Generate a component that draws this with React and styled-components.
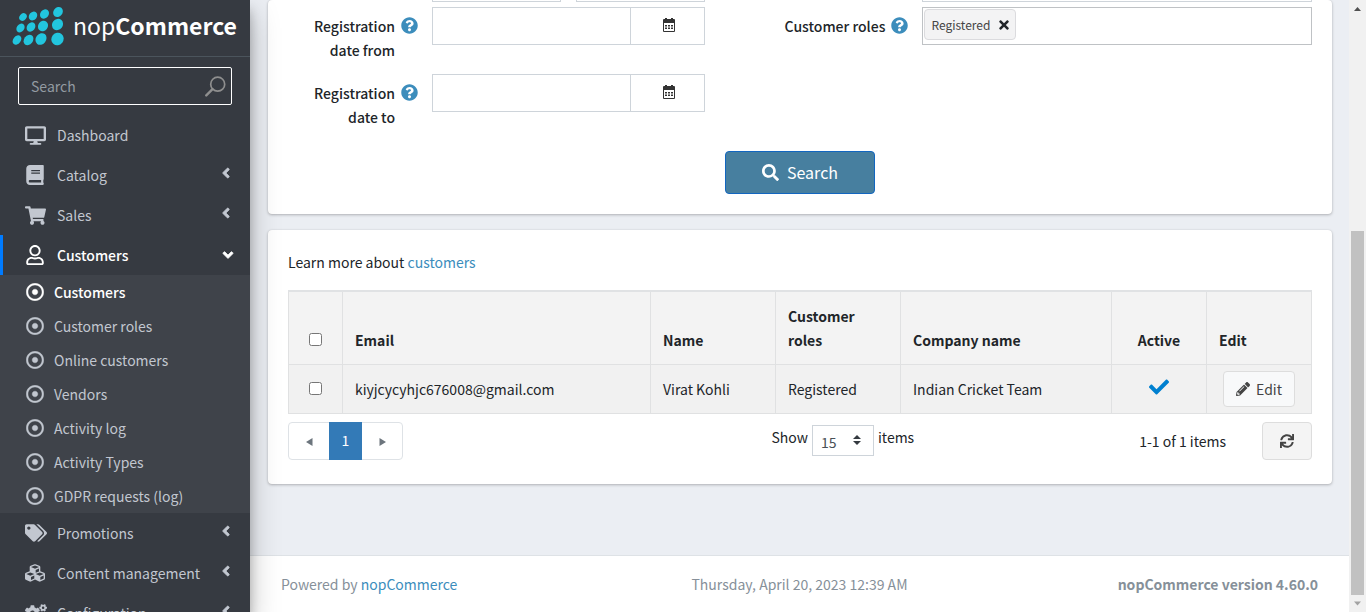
import React from "react";
import styled, { createGlobalStyle } from "styled-components";
import {
  FaAngleDown,
  FaAngleLeft,
  FaBook,
  FaCheck,
  FaCogs,
  FaCubes,
  FaDesktop,
  FaPencilAlt,
  FaQuestionCircle,
  FaRegDotCircle,
  FaRegUser,
  FaSearch,
  FaShoppingCart,
  FaSync,
  FaTags,
  FaTimes,
} from "react-icons/fa";

const GlobalStyle = createGlobalStyle`
  *, *::before, *::after { box-sizing: border-box; }
  body {
    margin: 0;
    background: #ebeef3;
    color: #212529;
    font-family: "Noto Sans CJK SC", "Noto Sans", sans-serif;
    font-size: 14px;
    line-height: 24px;
  }
  button, input, select { font: inherit; color: inherit; }
  a { color: #3c8dbc; text-decoration: none; }
`;

const Shell = styled.div`
  display: flex;
  height: 100vh;
  overflow: hidden;
`;

/* Sidebar */

const Sidebar = styled.aside`
  flex: none;
  width: 250px;
  overflow: hidden;
  z-index: 1;
  background: #363a41;
  color: #c2c7d0;
  box-shadow: 0 14px 28px rgba(0, 0, 0, 0.25), 0 10px 10px rgba(0, 0, 0, 0.22);
`;

const Brand = styled.a`
  display: flex;
  align-items: center;
  gap: 8px;
  height: 57px;
  padding: 0 12px 4px;
  border-bottom: 1px solid #4b545c;
  color: #fff;
  font-size: 23px;

  svg {
    flex: none;
  }

  span {
    padding-bottom: 2px;
  }
`;

const SearchBox = styled.label`
  display: flex;
  align-items: center;
  height: 38px;
  margin: 10px 18px;
  padding: 0 5px 0 12px;
  border: 1px solid #fff;
  border-radius: 2px;
`;

const SearchField = styled.input`
  flex: 1;
  min-width: 0;
  padding: 0;
  border: 0;
  outline: 0;
  background: none;

  &::placeholder {
    color: #939ba2;
    opacity: 1;
  }
`;

const Menu = styled.ul`
  margin: 0;
  padding: 0;
  list-style: none;
`;

const MenuLink = styled.a`
  display: grid;
  grid-template-columns: 22px 1fr 12px;
  align-items: center;
  column-gap: 10px;
  height: 40px;
  padding: 0 ${(p) => (p.$active ? 18 : 20)}px 0 22px;
  border-left: 3px solid ${(p) => (p.$active ? "#007bff" : "transparent")};
  color: ${(p) => (p.$active ? "#fff" : "#c2c7d0")};
  font-weight: ${(p) => (p.$active ? 500 : 400)};
  white-space: nowrap;

  svg:last-child {
    margin-bottom: ${(p) => (p.$active ? 0 : 4)}px;
    stroke: currentColor;
    stroke-width: 24px;
  }
`;

const SubMenu = styled(Menu)`
  background: #3f434a;
`;

const SubLink = styled.a`
  display: flex;
  align-items: center;
  gap: 10px;
  height: 34px;
  padding-left: 26px;
  color: ${(p) => (p.$active ? "#fff" : "#c2c7d0")};
  font-weight: ${(p) => (p.$active ? 500 : 400)};

  svg {
    stroke: currentColor;
    stroke-width: 12px;
  }
`;

/* Page */

const Page = styled.div`
  display: flex;
  flex: 1;
  flex-direction: column;
  min-width: 0;
`;

const Content = styled.main`
  display: flex;
  flex: 1;
  flex-direction: column;
  gap: 16px;
  padding: 0 17px 0 18px;
`;

const Card = styled.section`
  padding: 20px;
  border-radius: 4px;
  background: #fff;
  box-shadow: 0 0 1px rgba(0, 0, 0, 0.13), 0 1px 3px rgba(0, 0, 0, 0.25);
`;

const FilterCard = styled(Card)`
  padding-top: 0;
`;

const Filters = styled.form`
  display: grid;
  grid-template-columns: 144px 273fr 217px 389fr;
  row-gap: 5px;
  align-items: start;
  margin-top: -36px;
`;

const LabelCell = styled.div`
  display: flex;
  grid-column: ${(p) => p.$column};
  justify-content: flex-end;
  gap: 6px;
  padding: 7px 14px 0 0;

  svg {
    flex: none;
    margin-top: 3px;
    color: #3c8dbc;
  }
`;

const FieldLabel = styled.label`
  width: ${(p) => (p.$wide ? "auto" : "90px")};
  height: ${(p) => (p.$wide ? "24px" : "55px")};
  font-weight: 500;
  text-align: right;
`;

const InputPair = styled.div`
  display: grid;
  grid-column: 2;
  grid-template-columns: 1fr 1fr;
  gap: 15px;
`;

const TextInput = styled.input`
  width: 100%;
  min-width: 0;
  height: 38px;
  padding: 6px 12px;
  border: 1px solid #ced4da;
  background: #fff;
`;

const DateGroup = styled.div`
  display: grid;
  grid-template-columns: 1fr 74px;
  height: 38px;
  border: 1px solid #ced4da;
`;

const DateInput = styled.input`
  min-width: 0;
  padding: 6px 12px;
  border: 0;
  background: #fff;
`;

const DateButton = styled.button`
  display: grid;
  place-items: center;
  padding: 0 0 2px 2px;
  border: 0;
  border-left: 1px solid #ced4da;
  background: #fff;
`;

const TagBox = styled.div`
  display: flex;
  align-items: flex-start;
  height: 38px;
  padding: 1px;
  border: 1px solid #bfc2c5;
`;

const Tag = styled.span`
  display: flex;
  align-items: center;
  gap: 7px;
  height: 31px;
  padding: 0 4px 0 6px;
  border: 1px solid #dbdbde;
  border-radius: 4px;
  background: #f3f3f4;
  color: #444;
  font-size: 12px;
`;

const TagRemove = styled.button`
  display: flex;
  padding: 0;
  border: 0;
  background: none;
  color: #212529;
`;

const SearchButton = styled.button`
  display: flex;
  align-items: center;
  justify-content: center;
  gap: 8px;
  width: 150px;
  height: 43px;
  margin: 15px auto 0;
  padding-bottom: 2px;
  border: 1px solid #1266c0;
  border-radius: 4px;
  background: #477f9f;
  color: #fff;
  font-size: 16px;
`;

const Intro = styled.p`
  margin: 0 0 16px;
`;

const Grid = styled.table`
  width: 100%;
  table-layout: fixed;
  border-collapse: collapse;
  border-top: 2px solid #e0e2e4;
  background: #f3f3f3;
`;

const Col = styled.col`
  width: ${(p) => p.$width}px;
`;

const HeadCell = styled.th`
  height: 73px;
  padding: 12px;
  border: 1px solid #e0e1e2;
  font-weight: 700;
  text-align: ${(p) => p.$align || "left"};
  vertical-align: bottom;
`;

const Cell = styled.td`
  height: 49px;
  padding: 0 12px;
  border: 1px solid #e0e1e2;
  background: #f1f1f1;
  text-align: ${(p) => p.$align || "left"};
  white-space: nowrap;
`;

const Check = styled.input`
  width: 13px;
  height: 13px;
  margin: 0;
  vertical-align: baseline;
`;

const ActiveMark = styled(FaCheck)`
  display: block;
  margin: 0 auto 4px;
  color: #0080d0;
`;

const EditButton = styled.button`
  display: flex;
  align-items: center;
  justify-content: center;
  gap: 6px;
  width: 72px;
  height: 36px;
  margin-left: 4px;
  border: 1px solid #ddd;
  border-radius: 4px;
  background: #f8f9fa;
  color: #444;
`;

const TableFooter = styled.div`
  display: grid;
  grid-template-columns: 483fr 540fr;
  align-items: center;
  padding: 8px 0 4px;
`;

const Pager = styled.nav`
  display: flex;
  justify-self: start;
  height: 38px;
  border: 1px solid #dee2e6;
  border-radius: 4px;
`;

const PageButton = styled.button`
  display: grid;
  place-items: center;
  width: ${(p) => (p.$current ? 33 : 40)}px;
  margin: ${(p) => (p.$current ? "-1px 0" : "0")};
  padding: 0 0 ${(p) => (p.$current ? 2 : 0)}px;
  border: 0;
  background: ${(p) => (p.$current ? "#337ab7" : "none")};
  color: ${(p) => (p.$current ? "#fff" : "#6c757d")};
`;

const PagerSide = styled.div`
  display: flex;
  align-items: center;
  justify-content: space-between;
`;

const PageSize = styled.label`
  display: flex;
  gap: 4px;
  margin-bottom: 2px;
`;

const SelectWrap = styled.span`
  display: flex;
  align-items: center;
  width: 62px;
  height: 31px;
  padding-right: 12px;
  border: 1px solid #ced4da;
`;

const Select = styled.select`
  flex: 1;
  min-width: 0;
  height: 29px;
  padding: 4px 0 0 8px;
  border: 0;
  appearance: none;
  background: none;
  color: #495057;
`;

const PagerInfo = styled.div`
  display: flex;
  align-items: center;
  gap: 36px;
`;

const RefreshButton = styled.button`
  display: grid;
  place-items: center;
  width: 50px;
  height: 38px;
  padding: 0;
  border: 1px solid #ddd;
  border-radius: 4px;
  background: #f4f4f4;
  color: #444;
`;

const Footer = styled.footer`
  display: grid;
  grid-template-columns: 1fr auto 1fr;
  padding: 16px 31px;
  border-top: 1px solid #dee2e6;
  background: #fff;
  color: #869099;

  strong {
    text-align: right;
  }
`;

/* Scroll track at the window edge */

const ScrollTrack = styled.div`
  display: flex;
  flex: none;
  flex-direction: column;
  align-items: center;
  width: 17px;
  background: #f1f1f1;
`;

const ScrollArrow = styled.svg`
  flex: none;
  width: 17px;
  height: 17px;
`;

const ScrollSpace = styled.div`
  flex: 214;
`;

const ScrollThumb = styled.div`
  flex: 364;
  width: 13px;
  background: #c1c1c1;
`;

const dots = [
  [23, 19, 3.4, 4.2],
  [33, 18, 3.9, 4.8],
  [44.5, 16, 4.2, 5],
  [58, 14, 4.5, 5.4],
  [20.5, 30, 3.7, 4.8],
  [31, 29, 4, 5],
  [43, 28, 4.8, 5.5],
  [57.5, 26.5, 5.3, 5.9],
  [17, 42, 3.8, 5.2],
  [28.5, 42, 4.4, 5.7],
  [41, 41, 5.1, 6.2],
  [57.5, 41, 6, 6.5],
];

function Logo() {
  return (
    <svg width="53" height="40" viewBox="12 8 53 40" aria-hidden="true">
      {dots.map(([x, y, rx, ry]) => (
        <ellipse
          key={`${x}-${y}`}
          cx={x}
          cy={y}
          rx={rx}
          ry={ry}
          fill="#22c5de"
          transform={`rotate(38 ${x} ${y})`}
        />
      ))}
    </svg>
  );
}

function Magnifier() {
  return (
    <svg width="21" height="21" viewBox="0 0 21 21" fill="none" stroke="#8f8f8f" aria-hidden="true">
      <circle cx="12.7" cy="8.2" r="7" strokeWidth="1.7" />
      <path d="M7.5 13.2 1.3 19.4" strokeWidth="2.4" strokeLinecap="round" />
    </svg>
  );
}

function Calendar() {
  return (
    <svg width="14" height="14" viewBox="0 0 14 14" aria-hidden="true">
      <path
        fill="#333"
        fillRule="evenodd"
        d="M3 0h2v1h4V0h2v1h1a1 1 0 0 1 1 1v11a1 1 0 0 1-1 1H2a1 1 0 0 1-1-1V2a1 1 0 0 1 1-1h1zM2 5v8h10V5zM3 7h2v1.500H3zM6 7h2v1.500H6zM9 7h2v1.500H9zM3 9.500h2V11H3zM6 9.500h2V11H6zM9 9.500h2V11H9z"
      />
    </svg>
  );
}

function SortArrows() {
  return (
    <svg width="8" height="10" viewBox="0 0 8 10" fill="#343a40" aria-hidden="true">
      <path d="M4 0 8 4H0zM4 10 0 6h8z" />
    </svg>
  );
}

function Triangle({ left }) {
  return (
    <svg width="7" height="10" viewBox="0 0 7 10" fill="currentColor" aria-hidden="true">
      <path d={left ? "M6.500 2v8L0 6z" : "M.5 2v8L7 6z"} />
    </svg>
  );
}

function MenuItem({ icon: Icon, size = 20, label, active, arrow = true, children }) {
  return (
    <li>
      <MenuLink href="#" $active={active}>
        <Icon size={size} />
        <span>{label}</span>
        {arrow ? active ? <FaAngleDown size={16} /> : <FaAngleLeft size={16} /> : <span />}
      </MenuLink>
      {children}
    </li>
  );
}

const customerLinks = [
  "Customers",
  "Customer roles",
  "Online customers",
  "Vendors",
  "Activity log",
  "Activity Types",
  "GDPR requests (log)",
];

function DateRow({ id, label }) {
  return (
    <>
      <LabelCell $column={1}>
        <FieldLabel htmlFor={id}>{label}</FieldLabel>
        <FaQuestionCircle size={17} />
      </LabelCell>
      <DateGroup>
        <DateInput id={id} type="text" />
        <DateButton type="button" aria-label="Open calendar">
          <Calendar />
        </DateButton>
      </DateGroup>
    </>
  );
}

const columns = [54, 308, 125, 125, 211, 95, 105];

export default function App() {
  return (
    <>
      <GlobalStyle />
      <Shell>
        <Sidebar>
          <Brand href="#">
            <Logo />
            <span>
              nop<b>Commerce</b>
            </span>
          </Brand>
          <SearchBox>
            <SearchField type="text" placeholder="Search" aria-label="Search" />
            <Magnifier />
          </SearchBox>
          <Menu>
            <MenuItem icon={FaDesktop} size={21} label="Dashboard" arrow={false} />
            <MenuItem icon={FaBook} label="Catalog" />
            <MenuItem icon={FaShoppingCart} size={21} label="Sales" />
            <MenuItem icon={FaRegUser} label="Customers" active>
              <SubMenu>
                {customerLinks.map((text, i) => (
                  <li key={text}>
                    <SubLink href="#" $active={i === 0}>
                      <FaRegDotCircle size={18} />
                      {text}
                    </SubLink>
                  </li>
                ))}
              </SubMenu>
            </MenuItem>
            <MenuItem icon={FaTags} size={22} label="Promotions" />
            <MenuItem icon={FaCubes} label="Content management" />
            <MenuItem icon={FaCogs} size={22} label="Configuration" />
          </Menu>
        </Sidebar>

        <Page>
          <Content>
            <FilterCard>
              <Filters>
                <InputPair>
                  <TextInput type="text" aria-label="Month of birth" />
                  <TextInput type="text" aria-label="Day of birth" />
                </InputPair>
                <span />
                <TextInput type="text" aria-label="Company" />

                <DateRow id="date-from" label="Registration date from" />
                <LabelCell $column={3}>
                  <FieldLabel htmlFor="roles-remove" $wide>
                    Customer roles
                  </FieldLabel>
                  <FaQuestionCircle size={17} />
                </LabelCell>
                <TagBox>
                  <Tag>
                    Registered
                    <TagRemove id="roles-remove" type="button" aria-label="Remove Registered">
                      <FaTimes size={14} />
                    </TagRemove>
                  </Tag>
                </TagBox>

                <DateRow id="date-to" label="Registration date to" />
              </Filters>
              <SearchButton type="button">
                <FaSearch size={17} />
                Search
              </SearchButton>
            </FilterCard>

            <Card>
              <Intro>
                Learn more about <a href="#">customers</a>
              </Intro>
              <Grid>
                <colgroup>
                  {columns.map((width, i) => (
                    <Col key={i} $width={width} />
                  ))}
                </colgroup>
                <thead>
                  <tr>
                    <HeadCell $align="center">
                      <Check type="checkbox" aria-label="Select all" />
                    </HeadCell>
                    <HeadCell>Email</HeadCell>
                    <HeadCell>Name</HeadCell>
                    <HeadCell>Customer roles</HeadCell>
                    <HeadCell>Company name</HeadCell>
                    <HeadCell $align="center">Active</HeadCell>
                    <HeadCell>Edit</HeadCell>
                  </tr>
                </thead>
                <tbody>
                  <tr>
                    <Cell $align="center">
                      <Check type="checkbox" aria-label="Select row" />
                    </Cell>
                    <Cell>kiyjcycyhjc676008@gmail.com</Cell>
                    <Cell>Virat Kohli</Cell>
                    <Cell>Registered</Cell>
                    <Cell>Indian Cricket Team</Cell>
                    <Cell>
                      <ActiveMark size={20} />
                    </Cell>
                    <Cell>
                      <EditButton type="button">
                        <FaPencilAlt size={14} />
                        Edit
                      </EditButton>
                    </Cell>
                  </tr>
                </tbody>
              </Grid>
              <TableFooter>
                <Pager aria-label="Pages">
                  <PageButton type="button" aria-label="Previous">
                    <Triangle left />
                  </PageButton>
                  <PageButton type="button" $current>
                    1
                  </PageButton>
                  <PageButton type="button" aria-label="Next">
                    <Triangle />
                  </PageButton>
                </Pager>
                <PagerSide>
                  <PageSize>
                    Show
                    <SelectWrap>
                      <Select defaultValue="15">
                        <option>15</option>
                        <option>20</option>
                        <option>50</option>
                      </Select>
                      <SortArrows />
                    </SelectWrap>
                    items
                  </PageSize>
                  <PagerInfo>
                    1-1 of 1 items
                    <RefreshButton type="button" aria-label="Refresh">
                      <FaSync size={14} />
                    </RefreshButton>
                  </PagerInfo>
                </PagerSide>
              </TableFooter>
            </Card>
          </Content>
          <Footer>
            <span>
              Powered by <a href="#">nopCommerce</a>
            </span>
            <span>Thursday, April 20, 2023 12:39 AM</span>
            <strong>nopCommerce version 4.60.0</strong>
          </Footer>
        </Page>

        <ScrollTrack aria-hidden="true">
          <ScrollArrow viewBox="0 0 17 17">
            <path d="M8.500 7 12 11H5z" fill="#505050" />
          </ScrollArrow>
          <ScrollSpace />
          <ScrollThumb />
          <ScrollArrow viewBox="0 0 17 17">
            <path d="M8.500 10.500 12 6.500H5z" fill="#a3a3a3" />
          </ScrollArrow>
        </ScrollTrack>
      </Shell>
    </>
  );
}
